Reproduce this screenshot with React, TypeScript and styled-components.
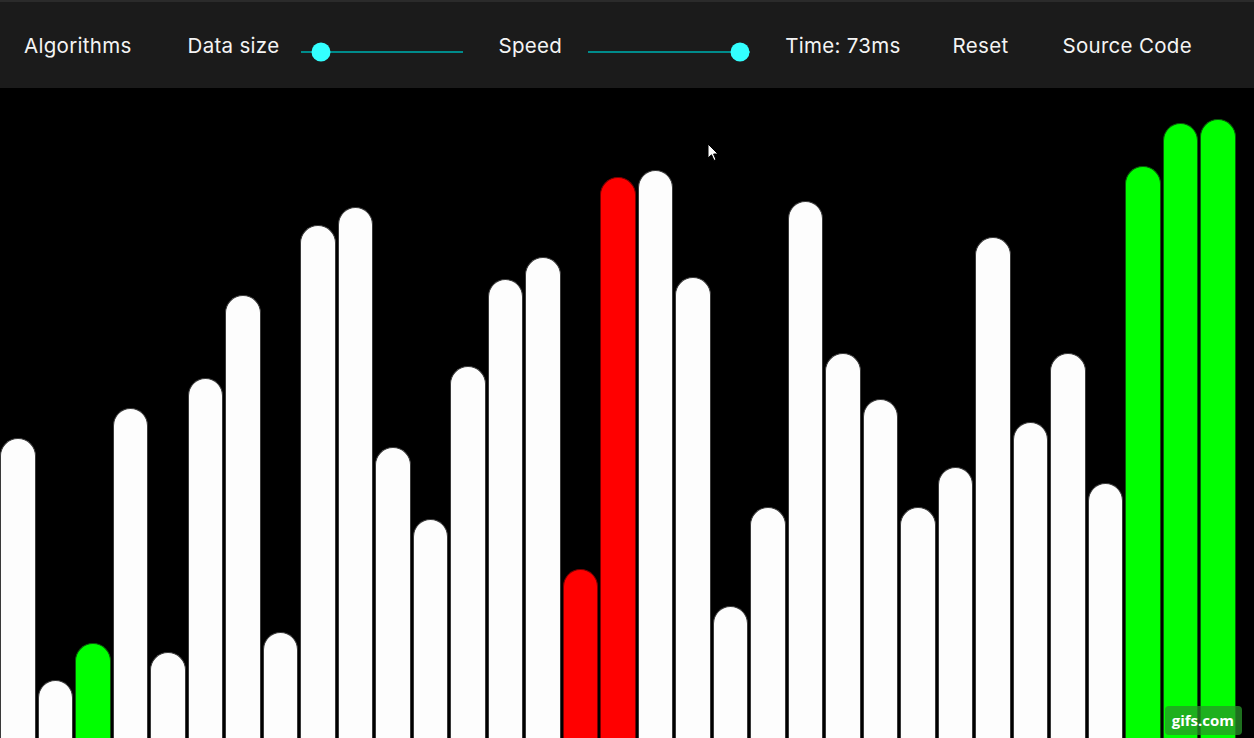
import React from "react";
import styled, { createGlobalStyle } from "styled-components";

type BarState = "idle" | "compare" | "sorted";

// bar tops as seen in the frame, bottom edge is the window edge (738)
const TOPS = [
  438, 680, 643, 408, 652, 378, 295, 632, 225, 207, 447, 519, 366, 279, 257,
  569, 177, 170, 277, 606, 507, 201, 353, 399, 507, 467, 237, 422, 353, 483,
  166, 123, 119,
];

const stateOf = (i: number): BarState => {
  if (i === 15 || i === 16) return "compare";
  if (i === 2 || i >= 30) return "sorted";
  return "idle";
};

const App = () => {
  return (
    <Page>
      <GlobalStyle />
      <Nav>
        <NavItem gap={56}>Algorithms</NavItem>
        <NavItem gap={22}>Data size</NavItem>
        <Slider value={12} gap={35} />
        <NavItem gap={26}>Speed</NavItem>
        <Slider value={94} gap={35} />
        <NavItem gap={52}>Time: 73ms</NavItem>
        <NavItem gap={54}>Reset</NavItem>
        <NavItem gap={0}>Source Code</NavItem>
      </Nav>

      <Graph>
        {TOPS.map((top, i) => (
          <Bar key={i} state={stateOf(i)} style={{ height: 738 - top }} />
        ))}
        <Cursor width="12" height="19" viewBox="0 0 12 19">
          <path
            d="M1 1 L1 15 L4.5 11.8 L7 17.5 L9 16.6 L6.6 11 L11 11 Z"
            fill="#fff"
            stroke="#000"
            strokeWidth="1"
          />
        </Cursor>
        <Watermark>gifs.com</Watermark>
      </Graph>
    </Page>
  );
};

export default App;

const Slider = ({ value, gap }: { value: number; gap: number }) => (
  <Track gap={gap}>
    <Thumb style={{ left: `${value}%` }} />
  </Track>
);

const GlobalStyle = createGlobalStyle`
body {
  margin: 0;
  background: #000;
  overflow: hidden;
  font-family: Inter, "Open Sans", sans-serif;
}
`;

const Page = styled.div`
width: 1254px;
height: 738px;
display: flex;
flex-direction: column;
background: #000;
`;

const Nav = styled.div`
height: 86px;
border-top: 2px solid #2b2b2b;
background-color: #1b1b1b;
display: flex;
align-items: center;
padding-left: 24px;
`;

const NavItem = styled.div<{ gap: number }>`
color: #f4f4f4;
font-size: 20.5px;
letter-spacing: 0.3px;
margin-right: ${(p) => p.gap}px;
white-space: nowrap;
cursor: pointer;
`;

const Track = styled.div<{ gap: number }>`
position: relative;
width: 162px;
height: 2px;
margin-top: 14px;
margin-right: ${(p) => p.gap}px;
background-color: #008b8b;
`;

const Thumb = styled.div`
position: absolute;
top: 1px;
width: 19px;
height: 19px;
border-radius: 50%;
background-color: #33ffff;
transform: translate(-50%, -50%);
`;

const Graph = styled.div`
position: relative;
flex: 1;
display: flex;
align-items: flex-end;
overflow: hidden;
`;

const Bar = styled.div<{ state: BarState }>`
flex: 0 0 35.5px;
margin-right: 2px;
box-sizing: border-box;
border-radius: 18px 18px 0 0;
border: 1px solid
  ${(p) => (p.state === "sorted" ? "#0a5a0a" : p.state === "compare" ? "#7a0000" : "#3a3a3a")};
border-bottom: none;
background-color: ${(p) =>
  p.state === "sorted" ? "#00ff00" : p.state === "compare" ? "#ff0000" : "#fdfdfd"};
`;

const Cursor = styled.svg`
position: absolute;
left: 707px;
top: 55px;
`;

const Watermark = styled.div`
position: absolute;
right: 12px;
bottom: 3px;
padding: 4px 8px 5px 7px;
border-radius: 4px;
background-color: rgba(40, 150, 40, 0.75);
color: #fff;
font-family: "Open Sans", sans-serif;
font-weight: 700;
font-size: 15px;
`;
